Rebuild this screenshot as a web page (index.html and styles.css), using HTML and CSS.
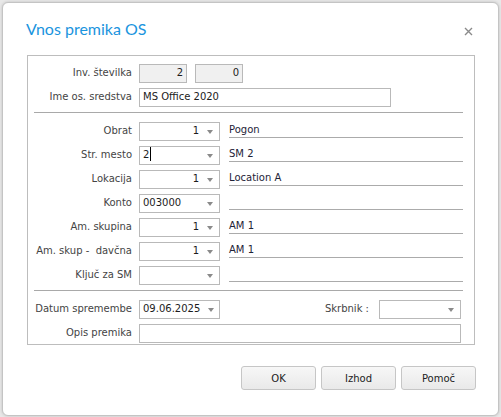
FILE: index.html
```html
<!DOCTYPE html>
<html lang="sl">
<head>
<meta charset="utf-8">
<title>Vnos premika OS</title>
<link rel="stylesheet" href="styles.css">
</head>
<body>
<div class="dialog">
  <div class="head">
    <h1 class="title">Vnos premika OS</h1>
    <svg class="close" width="9" height="9" viewBox="0 0 9 9"><path d="M1 1L8 8M8 1L1 8" stroke="#8a8a8a" stroke-width="1.4"/></svg>
  </div>

  <div class="group">
    <div class="row">
      <div class="lbl">Inv. številka</div>
      <div class="field ro num w48">2</div>
      <div class="field ro num w48 gap8">0</div>
    </div>
    <div class="row">
      <div class="lbl">Ime os. sredstva</div>
      <div class="field w252">MS Office 2020</div>
    </div>

    <div class="sep first"></div>

    <div class="row">
      <div class="lbl">Obrat</div>
      <div class="combo"><span class="val num">1</span><span class="arrow"></span></div>
      <div class="desc">Pogon</div>
    </div>
    <div class="row">
      <div class="lbl">Str. mesto</div>
      <div class="combo focus"><span class="val">2<i class="caret"></i></span><span class="arrow"></span></div>
      <div class="desc">SM 2</div>
    </div>
    <div class="row">
      <div class="lbl">Lokacija</div>
      <div class="combo"><span class="val num">1</span><span class="arrow"></span></div>
      <div class="desc">Location A</div>
    </div>
    <div class="row">
      <div class="lbl">Konto</div>
      <div class="combo"><span class="val">003000</span><span class="arrow"></span></div>
      <div class="desc"></div>
    </div>
    <div class="row">
      <div class="lbl">Am. skupina</div>
      <div class="combo"><span class="val num">1</span><span class="arrow"></span></div>
      <div class="desc">AM 1</div>
    </div>
    <div class="row">
      <div class="lbl">Am. skup -&nbsp; davčna</div>
      <div class="combo"><span class="val num">1</span><span class="arrow"></span></div>
      <div class="desc">AM 1</div>
    </div>
    <div class="row">
      <div class="lbl">Ključ za SM</div>
      <div class="combo"><span class="val"></span><span class="arrow"></span></div>
      <div class="desc"></div>
    </div>

    <div class="sep second"></div>

    <div class="row">
      <div class="lbl">Datum spremembe</div>
      <div class="combo"><span class="val">09.06.2025</span><span class="arrow"></span></div>
      <div class="lbl-inline">Skrbnik :</div>
      <div class="combo wide"><span class="val"></span><span class="arrow"></span></div>
    </div>
    <div class="row last">
      <div class="lbl">Opis premika</div>
      <div class="field w322"></div>
    </div>
  </div>

  <div class="buttons">
    <button class="btn">OK</button>
    <button class="btn">Izhod</button>
    <button class="btn">Pomoč</button>
  </div>
</div>
</body>
</html>
```

FILE: styles.css
```css
* {
  box-sizing: border-box;
}

html,
body {
  margin: 0;
}

body {
  width: 501px;
  height: 417px;
  padding: 2px;
  background: #e8e8e8;
  font-family: "DejaVu Sans", sans-serif;
  font-size: 10px;
  color: #444;
  overflow: hidden;
}

/* window */
.dialog {
  width: 497px;
  height: 414px;
  background: #fff;
  border: 1px solid #c4c4c4;
  border-radius: 6px;
  box-shadow: 0 0 3px rgba(0, 0, 0, 0.18);
  display: flex;
  flex-direction: column;
}

.head {
  height: 52px;
  display: flex;
  justify-content: space-between;
  align-items: flex-start;
  padding: 16px 25px 0 23px;
}

.title {
  margin: 0;
  font-family: "Lato", sans-serif;
  font-weight: 400;
  font-size: 16px;
  line-height: 20px;
  color: #1a94de;
}

.close {
  margin-top: 8px;
}

/* framed form area */
.group {
  margin: 0 23px 0 24px;
  border: 1px solid #bdbdbd;
  padding: 8px 0 1px 0;
}

.row {
  display: flex;
  align-items: flex-start;
  height: 19px;
  margin-bottom: 5px;
}

.row.last {
  margin-bottom: 0;
}

.lbl {
  width: 104px;
  margin-right: 7px;
  display: flex;
  justify-content: flex-end;
  white-space: nowrap;
  line-height: 17px;
}

.lbl-inline {
  margin-left: auto;
  margin-right: 10px;
  white-space: nowrap;
  line-height: 17px;
}

.field {
  height: 19px;
  border: 1px solid #b9b9b9;
  background: #fff;
  padding: 0 3px;
  line-height: 16px;
  color: #1c1c1c;
  white-space: nowrap;
}

.ro {
  background: #f0f0f0;
}

.num {
  text-align: right;
}

.w48 {
  width: 48px;
}

.gap8 {
  margin-left: 8px;
}

.w252 {
  width: 252px;
}

.w322 {
  width: 322px;
}

.sep {
  height: 1px;
  background: #a9a9a9;
  margin: 0 11px 9px 6px;
}

.sep.second {
  margin-top: 1px;
}

/* drop-down boxes */
.combo {
  width: 81px;
  height: 19px;
  border: 1px solid #b9b9b9;
  background: #fff;
  display: flex;
  color: #1c1c1c;
}

.combo.wide {
  width: 82px;
  margin-right: 13px;
}

.combo .val {
  flex: 1;
  padding: 0 2px 0 3px;
  line-height: 16px;
  white-space: nowrap;
}

.combo .arrow {
  width: 18px;
  position: relative;
}

.combo .arrow::after {
  content: "";
  position: absolute;
  left: 6px;
  top: 7px;
  border-left: 3px solid transparent;
  border-right: 3px solid transparent;
  border-top: 4px solid #8a8a8a;
}

.caret {
  display: inline-block;
  width: 1px;
  height: 14px;
  background: #000;
  vertical-align: -3px;
  margin-left: 1px;
}

/* underlined description next to a drop-down */
.desc {
  width: 234px;
  height: 16px;
  margin-left: 9px;
  border-bottom: 1px solid #ababab;
  line-height: 15px;
  color: #1e2337;
  white-space: nowrap;
}

/* dialog buttons */
.buttons {
  display: flex;
  justify-content: flex-end;
  gap: 5px;
  margin: 21px 22px 0 0;
}

.btn {
  width: 75px;
  height: 24px;
  border: 1px solid #c6c6c6;
  border-radius: 3px;
  background: linear-gradient(#f7f7f7, #e9e9e9);
  font-family: inherit;
  font-size: 10px;
  color: #222;
  padding: 0;
}
```
